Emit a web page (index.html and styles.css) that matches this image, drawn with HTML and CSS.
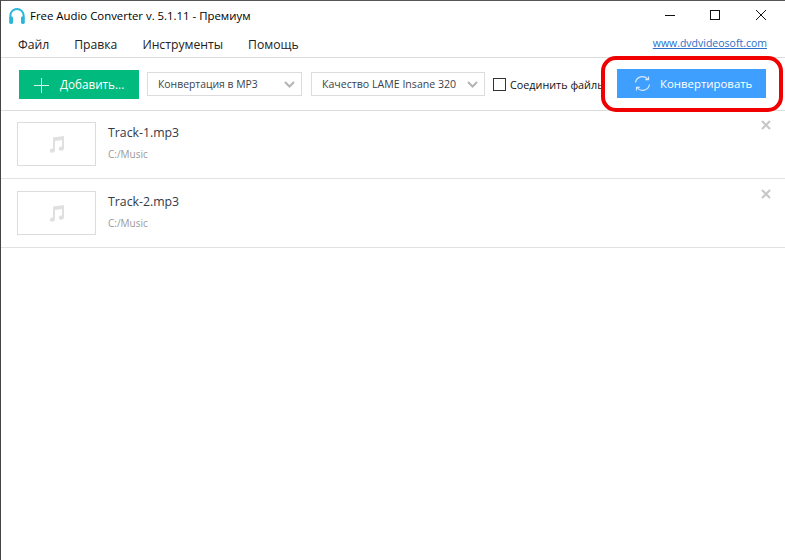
FILE: index.html
```html
<!DOCTYPE html>
<html lang="en">
<head>
    <meta charset="UTF-8">
    <title>Free Audio Converter</title>
    <link rel="stylesheet" href="styles.css">
</head>
<body>
    <div class="window">
        <div class="titlebar">
            <svg class="app-icon" width="18" height="18" viewBox="0 0 18 18" fill="none">
                <path d="M2.4 11V8.5a6.6 6.6 0 0 1 13.2 0V11" stroke="#29b6d8" stroke-width="2"/>
                <rect x="1.2" y="9.5" width="3.8" height="7.5" rx="1.4" fill="#29b6d8"/>
                <rect x="13" y="9.5" width="3.8" height="7.5" rx="1.4" fill="#29b6d8"/>
            </svg>
            <span class="title">Free Audio Converter v. 5.1.11 - Премиум</span>
            <div class="win-controls">
                <svg class="win-btn" width="46" height="29" viewBox="0 0 46 29"><path d="M18 14.5h10" stroke="#111" fill="none"/></svg>
                <svg class="win-btn" width="46" height="29" viewBox="0 0 46 29"><rect x="17.5" y="9.5" width="9" height="9" stroke="#111" fill="none"/></svg>
                <svg class="win-btn" width="46" height="29" viewBox="0 0 46 29"><path d="M17 9l10 10M27 9L17 19" stroke="#111" fill="none"/></svg>
            </div>
        </div>

        <div class="menubar">
            <span class="menu-item">Файл</span>
            <span class="menu-item">Правка</span>
            <span class="menu-item">Инструменты</span>
            <span class="menu-item">Помощь</span>
            <a class="site-link" href="#">www.dvdvideosoft.com</a>
        </div>

        <div class="toolbar">
            <button class="btn btn-add">
                <svg class="plus" width="15" height="15" viewBox="0 0 15 15"><path d="M7.5 0v15M0 7.5h15" stroke="#d9f5ea" fill="none"/></svg>
                <span>Добавить...</span>
            </button>
            <div class="select select-format">
                <span>Конвертация в MP3</span>
                <svg class="chevron" width="11" height="7" viewBox="0 0 11 7"><path d="M1 1l4.5 4.5L10 1" stroke="#b4b4b4" stroke-width="2" fill="none"/></svg>
            </div>
            <div class="select select-quality">
                <span>Качество LAME Insane 320</span>
                <svg class="chevron" width="11" height="7" viewBox="0 0 11 7"><path d="M1 1l4.5 4.5L10 1" stroke="#b4b4b4" stroke-width="2" fill="none"/></svg>
            </div>
            <label class="join">
                <span class="checkbox"></span>
                <span>Соединить файлы</span>
            </label>
            <div class="ring"></div>
            <button class="btn btn-convert">
                <svg width="17" height="17" viewBox="0 0 17 17" fill="none" stroke="#d6eafc" stroke-width="1.2">
                    <path d="M1.5 7.5A7 7 0 0 1 14 4.5"/>
                    <path d="M14.5 1.5v3.2h-3.2"/>
                    <path d="M15.5 9.5A7 7 0 0 1 3 12.5"/>
                    <path d="M2.5 15.5v-3.2h3.2"/>
                </svg>
                <span>Конвертировать</span>
            </button>
        </div>

        <div class="track">
            <div class="thumb">
                <svg width="16" height="18" viewBox="0 0 16 18"><path d="M4 2.5L15 1v12.5a2.6 2.1 0 1 1-2-2V5L6 6v9.5a2.6 2.1 0 1 1-2-2z" fill="#e0e0e0"/></svg>
            </div>
            <div class="track-info">
                <div class="track-name">Track-1.mp3</div>
                <div class="track-path">C:/Music</div>
            </div>
            <svg class="remove" width="10" height="10" viewBox="0 0 10 10"><path d="M1 1l8 8M9 1L1 9" stroke="#c8c8c8" stroke-width="2.2" fill="none"/></svg>
        </div>
        <div class="track">
            <div class="thumb">
                <svg width="16" height="18" viewBox="0 0 16 18"><path d="M4 2.5L15 1v12.5a2.6 2.1 0 1 1-2-2V5L6 6v9.5a2.6 2.1 0 1 1-2-2z" fill="#e0e0e0"/></svg>
            </div>
            <div class="track-info">
                <div class="track-name">Track-2.mp3</div>
                <div class="track-path">C:/Music</div>
            </div>
            <svg class="remove" width="10" height="10" viewBox="0 0 10 10"><path d="M1 1l8 8M9 1L1 9" stroke="#c8c8c8" stroke-width="2.2" fill="none"/></svg>
        </div>
    </div>
</body>
</html>
```

FILE: styles.css
```css
html, body {
    margin: 0;
    padding: 0;
    height: 100%;
    overflow: hidden;
    background: white;
}
.window {
    height: 560px;
    box-sizing: border-box;
    border-top: 1px solid #555;
    border-left: 1px solid #444;
    font-family: "Open Sans", "Noto Sans", sans-serif;
    font-size: 12px;
    color: #222;
}
.titlebar {
    display: flex;
    align-items: center;
    height: 29px;
    padding-left: 7px;
}
.app-icon {
    margin-right: 4px;
}
.title {
    font-size: 11.4px;
    color: #000;
}
.win-controls {
    display: flex;
    margin-left: auto;
}
.menubar {
    display: flex;
    align-items: center;
    box-sizing: border-box;
    height: 28px;
    padding: 2px 18px 0 17px;
    border-bottom: 1px solid #dcdcdc;
    font-size: 12.2px;
}
.menu-item {
    margin-right: 25px;
}
.site-link {
    margin-left: auto;
    margin-top: -4px;
    font-size: 10.5px;
    color: #2a6fc9;
}
.toolbar {
    position: relative;
    display: flex;
    align-items: center;
    height: 52px;
    padding: 0 18px;
    border-bottom: 1px solid #dcdcdc;
    white-space: nowrap;
}
.btn {
    display: flex;
    align-items: center;
    height: 29px;
    border: none;
    padding: 0;
    font-family: inherit;
    font-size: 11.7px;
    color: white;
}
.btn-add {
    width: 120px;
    flex: none;
    padding-left: 15px;
    gap: 11px;
    background: #00ba7e;
}
.plus {
    margin-top: 2px;
}
.select {
    display: flex;
    align-items: center;
    justify-content: space-between;
    box-sizing: border-box;
    height: 24px;
    flex: none;
    padding: 0 6px 0 10px;
    border: 1px solid #dcdcdc;
    color: #3a3f4a;
    font-size: 10.4px;
}
.select-format {
    width: 155px;
    margin-left: 8px;
}
.select-quality {
    width: 174px;
    margin-left: 9px;
    font-size: 10.6px;
}
.join {
    display: flex;
    align-items: center;
    gap: 4px;
    margin-left: 8px;
    color: #111;
    font-size: 10.8px;
}
.checkbox {
    width: 11px;
    height: 11px;
    border: 1px solid #333;
}
.ring {
    position: absolute;
    left: 600px;
    top: -2px;
    width: 174px;
    height: 48px;
    border: 4px solid #f00000;
    border-radius: 15px;
    background: white;
}
.btn-convert {
    position: absolute;
    left: 616px;
    top: 11px;
    width: 149px;
    padding-left: 17px;
    gap: 9px;
    background: #3f9fff;
    font-size: 11.4px;
}
.track {
    position: relative;
    display: flex;
    align-items: flex-start;
    height: 56px;
    padding: 11px 0 0 16px;
    border-bottom: 1px solid #e2e2e2;
}
.track + .track {
    padding-top: 12px;
}
.thumb {
    display: flex;
    align-items: center;
    justify-content: center;
    box-sizing: border-box;
    width: 79px;
    height: 44px;
    border: 1px solid #dcdcdc;
}
.track-info {
    margin-left: 12px;
    padding-top: 1px;
}
.track-name {
    font-size: 12.3px;
    line-height: 20px;
    color: #333a48;
    margin-bottom: 4px;
}
.track-path {
    font-size: 10px;
    line-height: 14px;
    color: #999;
}
.remove {
    position: absolute;
    left: 760px;
    top: 9px;
}
.track + .track .remove {
    top: 10px;
}
```
